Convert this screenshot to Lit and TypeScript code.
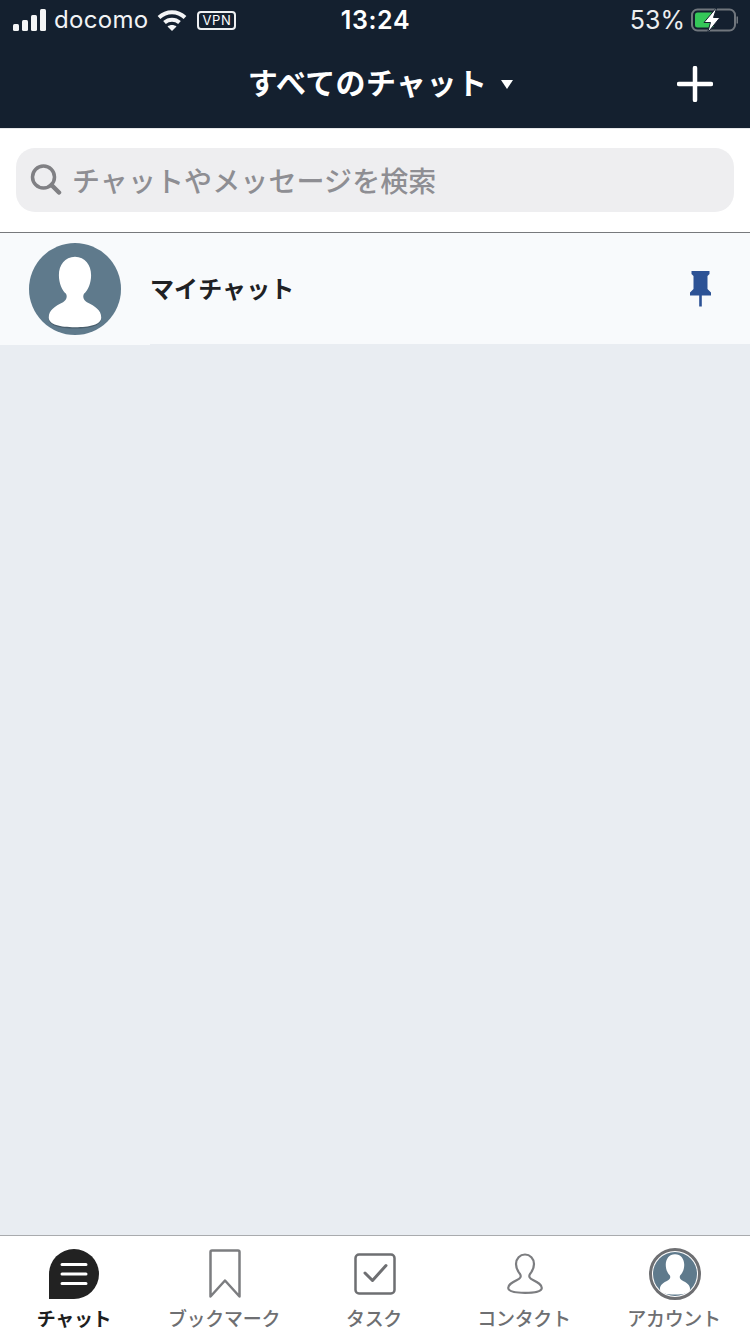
import { LitElement, html, css } from "lit";
import { customElement } from "lit/decorators.js";

const personPath = "M50 15C39 15 32.500 24 32.500 35C32.500 44 36 51 40 55C42 58 41 62 37 64.500C28 69 21.500 73 21.500 81C21.500 89 34 91.500 50 91.500C66 91.500 78.500 89 78.500 81C78.500 73 72 69 63 64.500C59 62 58 58 60 55C64 51 67.500 44 67.500 35C67.500 24 61 15 50 15Z";

const rowAvatar = () => html`<svg class="row-avatar" viewBox="0 0 100 100">
  <circle cx="50" cy="50" r="50" fill="#5f7a8c"></circle>
  <path d="M21.500 82C21.500 90 34 93 50 93C66 93 78.500 90 78.500 82Z" fill="#4a5f6d"></path>
  <path d=${personPath} fill="#fff"></path>
</svg>`;

const tabAvatar = () => html`<svg class="tab-avatar" viewBox="0 0 100 100">
  <circle cx="50" cy="50" r="50" fill="#5f7a8c"></circle>
  <path transform="translate(-10 -13) scale(1.2)" d=${personPath} fill="#fff"></path>
</svg>`;

@customElement("app-root")
export class AppRoot extends LitElement {
  static styles = css`
    :host { display: block; width: 750px; height: 1334px; font-family: "Noto Sans CJK JP", "Noto Sans", sans-serif; }
    .page { display: flex; flex-direction: column; width: 750px; height: 1334px; background: #e9edf2; overflow: hidden; }
    .top { height: 128px; background: #14202f; color: #fff; display: flex; flex-direction: column; flex: none; }
    .status { height: 40px; display: grid; grid-template-columns: 1fr auto 1fr; align-items: center; padding: 0 12px 0 13px; font-family: Inter, "Liberation Sans", sans-serif; font-size: 24px; }
    .status-left { display: flex; align-items: center; }
    .carrier { margin-left: 7px; font-size: 24px; letter-spacing: 0.3px; color: #f2f3f5; line-height: 40px; }
    .wifi { margin-left: 9px; display: block; }
    .vpn { margin-left: 10px; width: 39px; height: 19px; box-sizing: border-box; border: 2px solid #eef0f2; border-radius: 4px; font-size: 13px; letter-spacing: 0.5px; display: flex; align-items: center; justify-content: center; line-height: 1; }
    .time { font-weight: 600; font-size: 25px; letter-spacing: 0.6px; }
    .status-right { display: flex; align-items: center; justify-content: flex-end; gap: 6px; }
    .pct { font-size: 25px; color: #eceef0; }
    .nav { position: relative; flex: 1; display: flex; align-items: center; justify-content: center; padding: 0 0 6px 11px; }
    .title { font-size: 30px; font-weight: 700; letter-spacing: 0.4px; line-height: 40px; }
    .caret { margin: 7px 0 0 14px; width: 0; height: 0; border-left: 6.5px solid transparent; border-right: 6.5px solid transparent; border-top: 9px solid #fff; }
    .plus { position: absolute; left: 677px; top: 26px; display: block; }
    .search-wrap { flex: none; background: #fff; border-top: 1px solid #e6e7ea; padding: 19px 16px 20px; border-bottom: 1px solid #77797c; }
    .search { height: 64px; border-radius: 19px; background: #eeeef0; display: flex; align-items: center; padding-left: 14px; gap: 10px; }
    .placeholder { font-size: 28px; font-weight: 500; color: #8e8e93; letter-spacing: 0.1px; line-height: 40px; }
    .row { flex: none; height: 112px; background: #f8fafc; display: flex; align-items: center; padding-left: 29px; box-sizing: border-box; position: relative; }
    .row-avatar { width: 92px; height: 92px; display: block; }
    .row-name { margin: -4px 0 0 29px; font-size: 24px; font-weight: 700; color: #202124; letter-spacing: 0.1px; flex: 1; }
    .pin { margin: 0 39px 0 0; display: block; }
    .sep { position: absolute; left: 150px; right: 0; bottom: 0; height: 1px; background: #e9edf2; }
    .spacer { flex: 1; }
    .tabs { flex: none; height: 99px; box-sizing: border-box; background: #fff; border-top: 1px solid #a9abae; display: grid; grid-template-columns: repeat(5, 1fr); }
    .tab { display: flex; flex-direction: column; align-items: center; color: #6e6f72; }
    .tab .icon { height: 57px; margin-top: 13px; display: flex; align-items: flex-start; justify-content: center; }
    .tab .icon.low { height: 53px; margin-top: 17px; }
    .tab svg { display: block; }
    .tab .label { font-size: 19px; font-weight: 500; line-height: 24px; letter-spacing: -0.3px; white-space: nowrap; margin-left: -2px; }
    .tab.on { color: #1f1f1f; }
    .tab.on .label { font-weight: 700; }
    .chat-icon { margin-left: -2px; }
    .tab-avatar { width: 44px; height: 44px; }
    .ring { width: 52px; height: 52px; box-sizing: border-box; border: 3px solid #6e6f72; border-radius: 50%; display: flex; align-items: center; justify-content: center; background: #fff; margin-top: -1px; }
  `;

  render() {
    return html`<div class="page">
      <header class="top">
        <div class="status">
          <div class="status-left">
            <svg width="34" height="22" viewBox="0 0 34 22" fill="#f4f5f6">
              <rect x="0" y="15" width="6" height="7" rx="1.500"></rect>
              <rect x="9" y="11" width="6" height="11" rx="1.500"></rect>
              <rect x="18" y="6" width="6" height="16" rx="1.500"></rect>
              <rect x="27" y="0" width="6" height="22" rx="1.500"></rect>
            </svg>
            <span class="carrier">docomo</span>
            <svg class="wifi" width="30" height="22" viewBox="0 0 30 22" fill="none" stroke="#f4f5f6" stroke-width="4">
              <path d="M2 8.500C9.500 1.500 20.500 1.500 28 8.500"></path>
              <path d="M7.500 13.500C11.800 9.700 18.200 9.700 22.500 13.500"></path>
              <path d="M15 22L10.500 17.500C13 15.500 17 15.500 19.500 17.500Z" fill="#f4f5f6" stroke="none"></path>
            </svg>
            <span class="vpn">VPN</span>
          </div>
          <div class="time">13:24</div>
          <div class="status-right">
            <span class="pct">53%</span>
            <svg width="47" height="26" viewBox="0 -1 47 26">
              <rect x="1" y="1.500" width="43" height="21" rx="5.500" fill="none" stroke="#70767d" stroke-width="2"></rect>
              <rect x="45.500" y="8.500" width="1.500" height="7" fill="#70767d"></rect>
              <rect x="4" y="4.500" width="19" height="15" rx="2.500" fill="#35c759"></rect>
              <path d="M26 -1L13 14.500H19.500L16.500 25L29 9.500H22.500Z" fill="#fff" stroke="#14202f" stroke-width="1"></path>
            </svg>
          </div>
        </div>
        <div class="nav">
          <span class="title">すべてのチャット</span>
          <span class="caret"></span>
          <svg class="plus" width="36" height="36" viewBox="0 0 36 36" stroke="#fff" stroke-width="4.500" stroke-linecap="round">
            <path d="M18 2V34M2 18H34"></path>
          </svg>
        </div>
      </header>
      <div class="search-wrap">
        <div class="search">
          <svg width="32" height="32" viewBox="0 0 32 32" fill="none" stroke="#808084" stroke-width="3.500" stroke-linecap="round">
            <circle cx="13.500" cy="13" r="11"></circle>
            <path d="M21.500 21L29 28.500" stroke-width="4.500"></path>
          </svg>
          <span class="placeholder">チャットやメッセージを検索</span>
        </div>
      </div>
      <div class="row">
        ${rowAvatar()}
        <span class="row-name">マイチャット</span>
        <svg class="pin" width="21" height="36" viewBox="0 0 21 36" fill="#2c5295">
          <path d="M1.500 0H19.500V3L17.500 5V18L21 21.500V24.500H11.800V35.500H9.200V24.500H0V21.500L3.500 18V5L1.500 3Z"></path>
        </svg>
        <div class="sep"></div>
      </div>
      <div class="spacer"></div>
      <nav class="tabs">
        <div class="tab on">
          <div class="icon chat-icon">
            <svg width="50" height="50" viewBox="0 0 50 50">
              <path d="M25 0A25 25 0 0 1 25 50H0V25A25 25 0 0 1 25 0Z" fill="#222"></path>
              <path d="M13 15.500H37M13 25H37M13 34.500H37" stroke="#fff" stroke-width="3" stroke-linecap="round"></path>
            </svg>
          </div>
          <span class="label">チャット</span>
        </div>
        <div class="tab">
          <div class="icon">
            <svg width="32" height="50" viewBox="0 0 32 50" fill="none" stroke="#7c7d80" stroke-width="2.500" stroke-linejoin="round">
              <path d="M3 1.500H29C30 1.500 30.500 2 30.500 3V47.500L16 31.500L1.500 47.500V3C1.500 2 2 1.500 3 1.500Z"></path>
            </svg>
          </div>
          <span class="label">ブックマーク</span>
        </div>
        <div class="tab">
          <div class="icon low">
            <svg width="42" height="42" viewBox="0 0 42 42" fill="none" stroke="#6e6f72" stroke-width="2.500">
              <rect x="1.500" y="1.500" width="39" height="39" rx="3.500"></rect>
              <path d="M11 20L18.500 27.500L32 12.500" stroke-width="3" stroke-linecap="round" stroke-linejoin="round"></path>
            </svg>
          </div>
          <span class="label">タスク</span>
        </div>
        <div class="tab">
          <div class="icon low">
            <svg width="36" height="41" viewBox="0 0 36 41" fill="none" stroke="#7c7d80" stroke-width="2.200">
              <path d="M18 1.500C13 1.500 9 5.500 9 11C9 15.500 11 18.500 13 21C14.500 23.500 13.500 25.500 10 27C5 29.500 1.200 31.500 1.200 35C1.200 38.800 9.500 39.800 18 39.800C26.500 39.800 34.800 38.800 34.800 35C34.800 31.500 31 29.500 26 27C22.500 25.500 21.500 23.500 23 21C25 18.500 27 15.500 27 11C27 5.500 23 1.500 18 1.500Z"></path>
            </svg>
          </div>
          <span class="label">コンタクト</span>
        </div>
        <div class="tab">
          <div class="icon">
            <div class="ring">${tabAvatar()}</div>
          </div>
          <span class="label">アカウント</span>
        </div>
      </nav>
    </div>`;
  }
}
